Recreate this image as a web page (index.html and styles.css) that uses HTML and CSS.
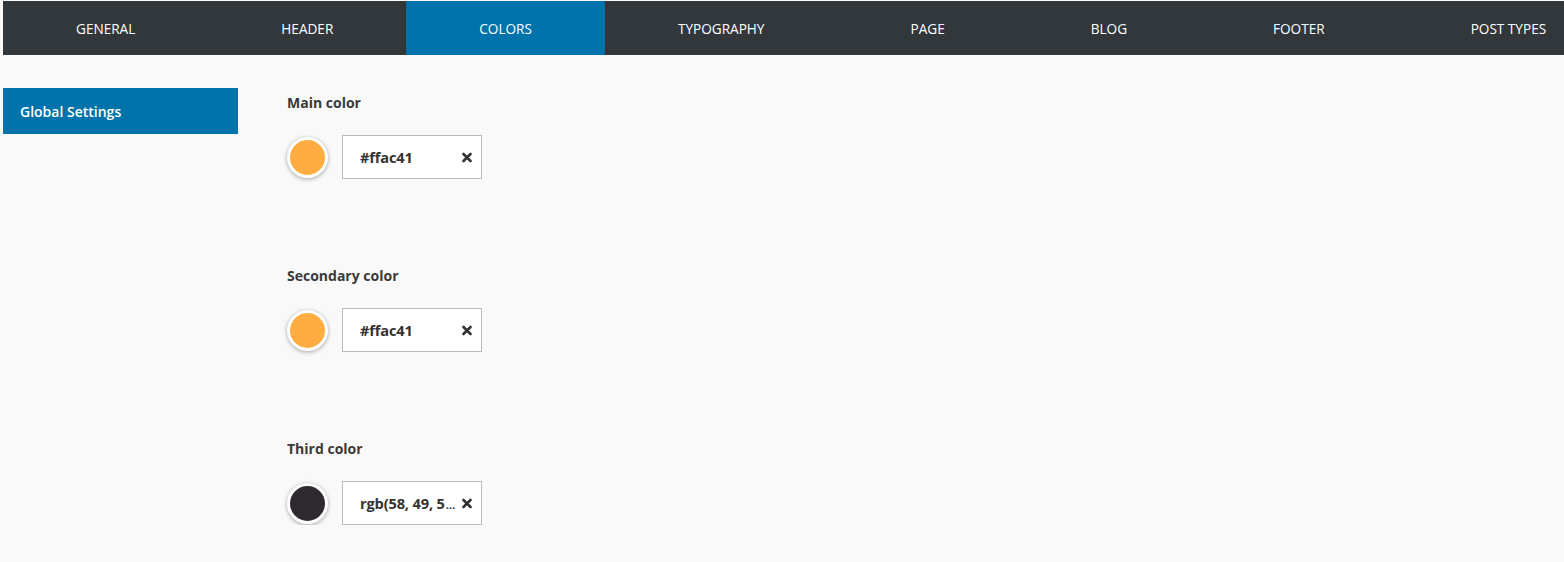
FILE: index.html
```html
<!DOCTYPE html>
<html lang="en">
<head>
  <meta charset="UTF-8" />
  <title>Theme Options - Colors</title>
  <link rel="stylesheet" href="styles.css">
</head>
<body>

  <!-- top tabs -->
  <ul class="tabs">
    <li>General</li>
    <li>Header</li>
    <li class="active">Colors</li>
    <li>Typography</li>
    <li>Page</li>
    <li>Blog</li>
    <li>Footer</li>
    <li>Post Types</li>
  </ul>

  <div class="main">
    <div class="sidebar">
      <div class="side-item active">Global Settings</div>
    </div>

    <div class="fields">
      <div class="field">
        <div class="field-label">Main color</div>
        <div class="picker">
          <span class="swatch" style="background:#ffac41"></span>
          <div class="color-input">
            <span class="value">#ffac41</span>
            <svg class="clear" width="10" height="11" viewBox="0 0 10 11"><path d="M1.5 2 L8.5 9 M8.5 2 L1.5 9" stroke="#333" stroke-width="2.6" stroke-linecap="round"/></svg>
          </div>
        </div>
      </div>

      <div class="field">
        <div class="field-label">Secondary color</div>
        <div class="picker">
          <span class="swatch" style="background:#ffac41"></span>
          <div class="color-input">
            <span class="value">#ffac41</span>
            <svg class="clear" width="10" height="11" viewBox="0 0 10 11"><path d="M1.5 2 L8.5 9 M8.5 2 L1.5 9" stroke="#333" stroke-width="2.6" stroke-linecap="round"/></svg>
          </div>
        </div>
      </div>

      <div class="field">
        <div class="field-label">Third color</div>
        <div class="picker">
          <span class="swatch" style="background:rgb(46, 41, 46)"></span>
          <div class="color-input">
            <span class="value">rgb(58, 49, 5<span class="more">…</span></span>
            <svg class="clear" width="10" height="11" viewBox="0 0 10 11"><path d="M1.5 2 L8.5 9 M8.5 2 L1.5 9" stroke="#333" stroke-width="2.6" stroke-linecap="round"/></svg>
          </div>
        </div>
      </div>
    </div>
  </div>

</body>
</html>
```

FILE: styles.css
```css
body {
  margin: 0;
  padding: 1px 0 0 3px;
  background: #f9f9f9;
  font-family: "Open Sans", "Noto Sans", sans-serif;
  color: #444;
}

.tabs {
  display: flex;
  margin: 0;
  padding: 0;
  list-style: none;
  height: 54px;
  background: #32373c;
  overflow: hidden;
  white-space: nowrap;
}

.tabs li {
  padding: 1px 73px 0;
  line-height: 54px;
  font-size: 13.6px;
  text-transform: uppercase;
  color: #fff;
}

.tabs li.active {
  background: #0073aa;
}

.main {
  display: flex;
}

.sidebar {
  width: 235px;
  margin-top: 33px;
}

.side-item {
  height: 46px;
  line-height: 48px;
  padding-left: 17px;
  font-size: 14px;
  font-weight: 600;
  color: #fff;
}

.side-item.active {
  background: #0073aa;
}

.fields {
  margin-left: 49px;
  padding-top: 38px;
}

.field {
  margin-bottom: 87px;
}

.field:last-child {
  margin-bottom: 0;
}

.field-label {
  font-size: 14px;
  font-weight: 700;
  line-height: 19px;
  color: #3a3a3a;
  margin-bottom: 23px;
}

.picker {
  display: flex;
  align-items: center;
  gap: 14px;
}

.swatch {
  width: 35px;
  height: 35px;
  border-radius: 50%;
  border: 3px solid #fff;
  box-shadow: 0 1px 4px rgba(0, 0, 0, 0.35);
}

.color-input {
  display: flex;
  align-items: center;
  width: 112px;
  height: 42px;
  border: 1px solid #bbb;
  background: #fff;
  padding: 0 9px 0 17px;
}

.value {
  flex: 1;
  overflow: hidden;
  white-space: nowrap;
  font-size: 14.6px;
  font-weight: 700;
  letter-spacing: -0.15px;
  color: #333;
}

.value .more {
  font-size: 11px;
  margin-left: 1px;
}

.clear {
  flex: none;
  margin-left: 3px;
}
```
